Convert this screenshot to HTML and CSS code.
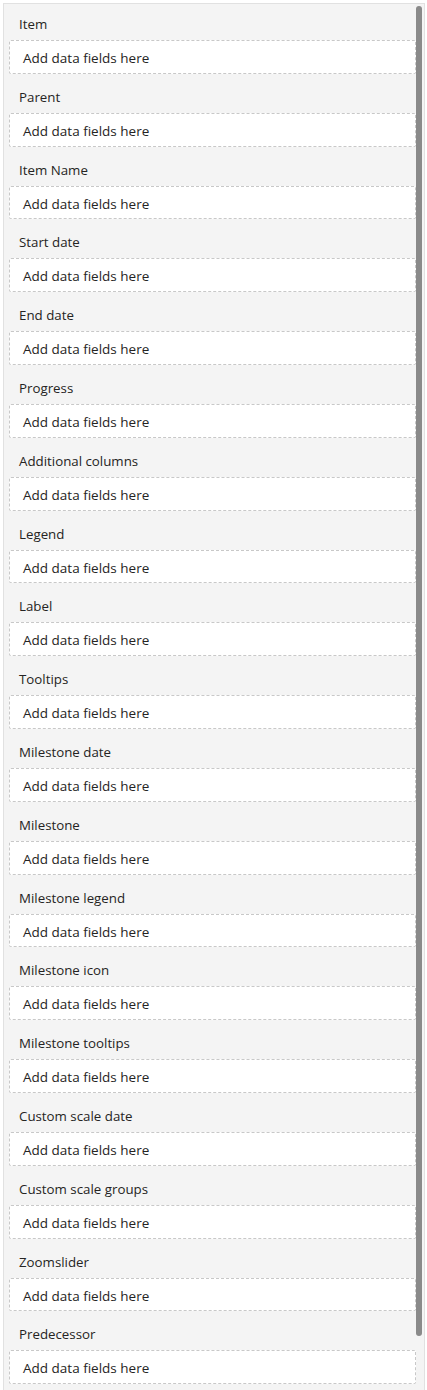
FILE: index.html
```html
<!DOCTYPE html>
<html lang="en">
<head>
    <meta charset="UTF-8">
    <meta name="viewport" content="width=device-width, initial-scale=1.0">
    <title>Fields</title>
    <link rel="stylesheet" href="styles.css">
</head>
<body>
    <div class="pane">
        <div class="wells">
            <div class="well"><div class="well-title">Item</div><div class="drop">Add data fields here</div></div>
            <div class="well"><div class="well-title">Parent</div><div class="drop">Add data fields here</div></div>
            <div class="well"><div class="well-title">Item Name</div><div class="drop">Add data fields here</div></div>
            <div class="well"><div class="well-title">Start date</div><div class="drop">Add data fields here</div></div>
            <div class="well"><div class="well-title">End date</div><div class="drop">Add data fields here</div></div>
            <div class="well"><div class="well-title">Progress</div><div class="drop">Add data fields here</div></div>
            <div class="well"><div class="well-title">Additional columns</div><div class="drop">Add data fields here</div></div>
            <div class="well"><div class="well-title">Legend</div><div class="drop">Add data fields here</div></div>
            <div class="well"><div class="well-title">Label</div><div class="drop">Add data fields here</div></div>
            <div class="well"><div class="well-title">Tooltips</div><div class="drop">Add data fields here</div></div>
            <div class="well"><div class="well-title">Milestone date</div><div class="drop">Add data fields here</div></div>
            <div class="well"><div class="well-title">Milestone</div><div class="drop">Add data fields here</div></div>
            <div class="well"><div class="well-title">Milestone legend</div><div class="drop">Add data fields here</div></div>
            <div class="well"><div class="well-title">Milestone icon</div><div class="drop">Add data fields here</div></div>
            <div class="well"><div class="well-title">Milestone tooltips</div><div class="drop">Add data fields here</div></div>
            <div class="well"><div class="well-title">Custom scale date</div><div class="drop">Add data fields here</div></div>
            <div class="well"><div class="well-title">Custom scale groups</div><div class="drop">Add data fields here</div></div>
            <div class="well"><div class="well-title">Zoomslider</div><div class="drop">Add data fields here</div></div>
            <div class="well"><div class="well-title">Predecessor</div><div class="drop">Add data fields here</div></div>
        </div>
        <div class="track">
            <div class="thumb"></div>
        </div>
    </div>
</body>
</html>
```

FILE: styles.css
```css
* {
    margin: 0;
    padding: 0;
    box-sizing: border-box;
}

body {
    background: #fff;
    font-family: "Open Sans", "Noto Sans", sans-serif;
    color: #252423;
    padding: 3px 2px 0 3px;
}

.pane {
    display: flex;
    background: #f4f4f4;
    border-left: 1px solid #e1e1e1;
    border-top: 1px solid #e1e1e1;
    border-right: 1px solid #e1e1e1;
    height: 1387px;
}

.wells {
    flex: 1;
    padding-left: 5px;
}

.well {
    margin-bottom: 3px;
}

.well-title {
    height: 36px;
    padding-top: 11px;
    padding-left: 10px;
    font-size: 13.3px;
    line-height: 18px;
}

.drop {
    height: 33.8px;
    background: #fff;
    border: 1px dashed #c8c8c8;
    border-radius: 2px;
    padding-left: 13px;
    font-size: 13.5px;
    line-height: 34px;
}

.track {
    width: 8px;
    padding: 2px 2px 0 0;
}

.thumb {
    width: 6px;
    height: 1330px;
    background: #8a8a8a;
    border-radius: 3px;
}
```
